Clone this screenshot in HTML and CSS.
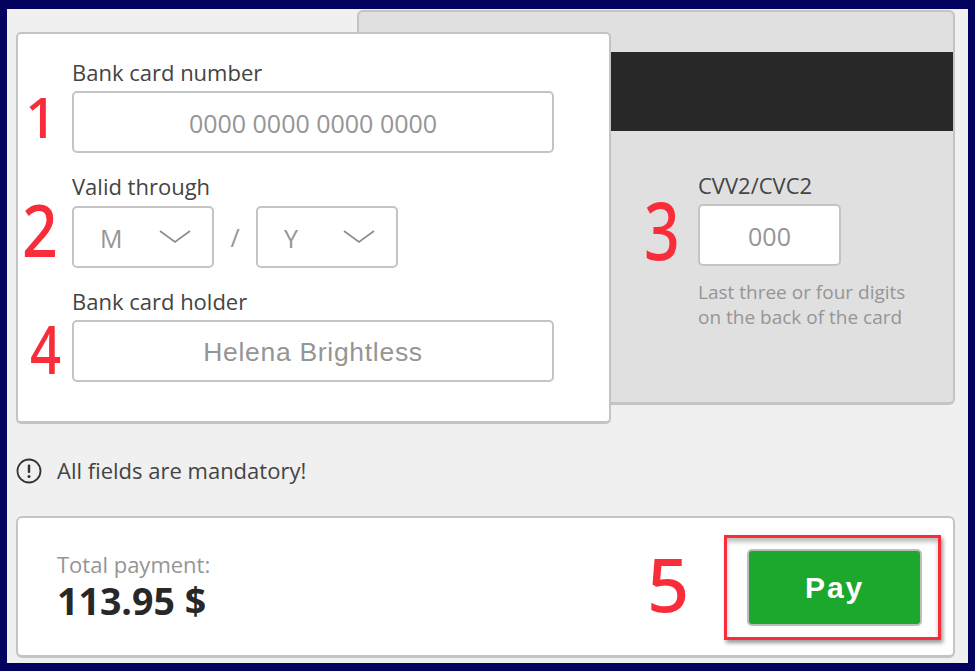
FILE: index.html
```html
<!DOCTYPE html>
<html lang="en">
<head>
    <meta charset="UTF-8">
    <meta name="viewport" content="width=device-width, initial-scale=1.0">
    <title>Payment</title>
    <link rel="stylesheet" href="styles.css">
</head>
<body>
    <div class="page">
        <div class="cards">
            <section class="card-front">
                <div class="group">
                    <label class="label">Bank card number</label>
                    <input type="text" class="field" placeholder="0000 0000 0000 0000">
                </div>
                <div class="group">
                    <label class="label">Valid through</label>
                    <div class="expiry">
                        <div class="select">
                            <span>M</span>
                            <svg class="chevron" width="32" height="14" viewBox="0 0 32 14"><path d="M1 1 L16 12 L31 1" fill="none" stroke="#8c8c8c" stroke-width="1.6"/></svg>
                        </div>
                        <span class="slash">/</span>
                        <div class="select">
                            <span>Y</span>
                            <svg class="chevron" width="32" height="14" viewBox="0 0 32 14"><path d="M1 1 L16 12 L31 1" fill="none" stroke="#8c8c8c" stroke-width="1.6"/></svg>
                        </div>
                    </div>
                </div>
                <div class="group">
                    <label class="label">Bank card holder</label>
                    <input type="text" class="field holder" placeholder="Helena Brightless">
                </div>
            </section>
            <section class="card-back">
                <div class="stripe"></div>
                <div class="cvv">
                    <label class="label">CVV2/CVC2</label>
                    <input type="text" class="field cvv-field" placeholder="000">
                    <p class="hint">Last three or four digits<br>on the back of the card</p>
                </div>
            </section>
        </div>

        <div class="notice">
            <svg width="26" height="26" viewBox="0 0 26 26"><circle cx="13" cy="13" r="11.5" fill="none" stroke="#333" stroke-width="1.8"/><rect x="11.8" y="6.5" width="2.4" height="8.5" rx="1" fill="#333"/><circle cx="13" cy="18.4" r="1.5" fill="#333"/></svg>
            <span class="notice-text">All fields are mandatory!</span>
        </div>

        <footer class="total">
            <div>
                <div class="total-label">Total payment:</div>
                <div class="total-sum">113.95 $</div>
            </div>
            <button class="pay">Pay</button>
        </footer>
    </div>

    <!-- red marks drawn over the screenshot -->
    <span class="mark mark-1">1</span>
    <span class="mark mark-2">2</span>
    <span class="mark mark-3">3</span>
    <span class="mark mark-4">4</span>
    <span class="mark mark-5">5</span>
    <div class="pay-frame"></div>
</body>
</html>
```

FILE: styles.css
```css
* {
    box-sizing: border-box;
}
html, body {
    height: 100%;
}
body {
    position: relative;
    margin: 0;
    overflow: hidden;
    background-color: #03035f;
    font-family: "Open Sans", sans-serif;
}
.page {
    width: 961px;
    height: 654px;
    margin: 9px 0 0 7px;
    padding: 1px 0 0 9px;
    background-color: #f0f0f0;
}
.cards {
    display: flex;
    align-items: flex-start;
}
.card-front {
    position: relative;
    z-index: 1;
    width: 595px;
    height: 392px;
    margin-top: 22px;
    padding: 25px 0 0 54px;
    background-color: #fff;
    border: 2px solid #c4c4c4;
    border-bottom-width: 3px;
    border-radius: 5px;
}
.card-back {
    width: 598px;
    height: 395px;
    margin-left: -254px;
    padding-top: 40px;
    background-color: #e0e0e0;
    border: 2px solid #c4c4c4;
    border-bottom-width: 3px;
    border-radius: 6px;
}
.stripe {
    height: 79px;
    background-color: #282828;
}
.group {
    margin-bottom: 20px;
}
.label {
    display: block;
    height: 28px;
    margin-bottom: 4px;
    font-size: 22px;
    line-height: 26px;
    color: #444;
}
.field {
    display: block;
    width: 482px;
    height: 62px;
    padding: 2px 0 0;
    background-color: #fff;
    border: 2px solid #c4c4c4;
    border-radius: 5px;
    font-family: "Open Sans", sans-serif;
    font-size: 25px;
    text-align: center;
    outline: none;
}
.field::placeholder {
    color: #959595;
    opacity: 1;
}
.holder {
    padding-top: 3px;
    font-family: "Liberation Sans", sans-serif;
    font-size: 26.5px;
    letter-spacing: 0.7px;
}
.expiry {
    display: flex;
    align-items: center;
    padding-top: 1px;
}
.select {
    display: flex;
    align-items: center;
    justify-content: space-between;
    width: 142px;
    height: 62px;
    padding: 1px 21px 0 26px;
    border: 2px solid #c4c4c4;
    border-radius: 5px;
    font-size: 25px;
    color: #959595;
}
.chevron {
    margin-top: -1px;
}
.slash {
    width: 42px;
    font-size: 25px;
    text-align: center;
    color: #959595;
}
.cvv {
    padding: 41px 0 0 339px;
}
.cvv-field {
    width: 143px;
}
.hint {
    margin: 14px 0 0;
    font-size: 19px;
    line-height: 25px;
    color: #959595;
}
.notice {
    display: flex;
    align-items: center;
    gap: 15px;
    height: 26px;
    margin-top: 34px;
    font-size: 22px;
    color: #444;
}
.notice-text {
    margin-top: -2px;
}
.total {
    display: flex;
    align-items: center;
    justify-content: space-between;
    width: 939px;
    height: 142px;
    margin-top: 32px;
    padding: 0 31px 0 39px;
    background-color: #fff;
    border: 2px solid #c4c4c4;
    border-bottom-width: 3px;
    border-radius: 6px;
}
.total-label {
    font-size: 22px;
    line-height: 28px;
    color: #959595;
}
.total-sum {
    font-size: 37.5px;
    font-weight: 700;
    line-height: 46px;
    color: #282828;
}
.pay {
    width: 175px;
    height: 77px;
    margin-top: 2px;
    padding: 0;
    background-color: #1ba82d;
    border: 2px solid #bdbdbd;
    border-radius: 5px;
    font-family: "Liberation Sans", sans-serif;
    font-size: 30px;
    font-weight: bold;
    letter-spacing: 1.8px;
    color: #fff;
}
.mark {
    position: absolute;
    z-index: 2;
    font-family: "Noto Sans", sans-serif;
    font-weight: 500;
    line-height: 1;
    color: #f92d3a;
    transform-origin: left top;
}
.mark-1 {
    left: 25px;
    top: 88px;
    font-size: 56px;
}
.mark-2 {
    left: 22px;
    top: 193px;
    font-size: 72px;
    transform: scaleX(0.87);
}
.mark-3 {
    left: 644px;
    top: 189px;
    font-size: 80px;
    transform: scaleX(0.78);
}
.mark-4 {
    left: 30px;
    top: 314px;
    font-size: 68px;
    transform: scaleX(0.8);
}
.mark-5 {
    left: 647px;
    top: 547px;
    font-size: 74px;
}
.pay-frame {
    position: absolute;
    z-index: 2;
    left: 724px;
    top: 535px;
    width: 217px;
    height: 105px;
    border: 3px solid #f92d3a;
    box-shadow: 2px 3px 4px rgba(0, 0, 0, 0.4), inset 0 4px 4px rgba(0, 0, 0, 0.25);
}
```
